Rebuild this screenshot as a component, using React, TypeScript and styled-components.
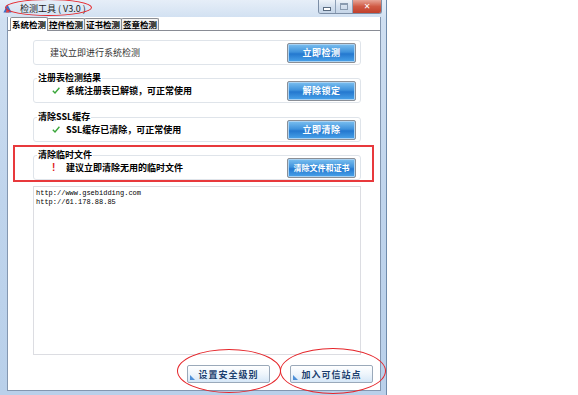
import React from "react";
import styled, { createGlobalStyle } from "styled-components";

const GlobalStyle = createGlobalStyle`
  html, body {
    margin: 0;
    padding: 0;
    background: #fff;
  }
  body {
    font-family: "Noto Sans CJK SC", "Noto Sans", sans-serif;
  }
`;

function CheckIcon() {
  return (
    <svg width="8" height="7" viewBox="0 0 8 7">
      <path d="M0.8 3.8 L3 6 L7.4 0.8" fill="none" stroke="#3aa63a" strokeWidth="1.4" />
    </svg>
  );
}

function AppIcon() {
  return (
    <svg width="9" height="9" viewBox="0 0 9 9">
      <path d="M4.5 0.5 L8.6 8.4 L0.4 8.4 Z" fill="#3c6fc6" />
      <path d="M4.5 4 L6.4 8.4 L2.6 8.4 Z" fill="#e04848" />
    </svg>
  );
}

const sections = [
  {
    label: "注册表检测结果",
    text: "系统注册表已解锁，可正常使用",
    button: "解除锁定",
    ok: true,
  },
  {
    label: "清除SSL缓存",
    text: "SSL缓存已清除，可正常使用",
    button: "立即清除",
    ok: true,
  },
  {
    label: "清除临时文件",
    text: "建议立即清除无用的临时文件",
    button: "清除文件和证书",
    ok: false,
  },
];

const tabs = ["系统检测", "控件检测", "证书检测", "签章检测"];

export default function App() {
  return (
    <Page>
      <GlobalStyle />
      <Window>
        <TitleBar>
          <AppIcon />
          <Title>检测工具 ( V3.0 )</Title>
          <Controls>
            <CtrlButton>
              <MinGlyph />
            </CtrlButton>
            <CtrlButton>
              <MaxGlyph />
            </CtrlButton>
            <CloseButton>✕</CloseButton>
          </Controls>
        </TitleBar>
        <Client>
          <TabStrip>
            {tabs.map((t, i) => (
              <Tab key={t} $active={i === 0}>
                {t}
              </Tab>
            ))}
          </TabStrip>
          <Panel>
            <Box>
              <Hint>建议立即进行系统检测</Hint>
              <ActionButton>立即检测</ActionButton>
            </Box>
            {sections.map((s, i) => (
              <Group key={s.label} $gap={i === 1 ? 9 : 8}>
                <Legend>{s.label}</Legend>
                <Box>
                  <Message>
                    <Mark>{s.ok ? <CheckIcon /> : <Bang>!</Bang>}</Mark>
                    {s.text}
                  </Message>
                  <ActionButton $small={s.button.length > 4}>{s.button}</ActionButton>
                </Box>
              </Group>
            ))}
            <Sites>
              {"http://www.gsebidding.com\nhttp://61.178.88.85"}
            </Sites>
            <BottomRow>
              <LightButton>设置安全级别</LightButton>
              <LightButton>加入可信站点</LightButton>
            </BottomRow>
          </Panel>
        </Client>
      </Window>

      <Ellipse $x={5} $y={-1} $w={87} $h={17} />
      <Frame />
      <Ellipse $x={177} $y={349} $w={104} $h={44} />
      <Ellipse $x={280} $y={348} $w={106} $h={46} />
    </Page>
  );
}

const Page = styled.div`
  position: relative;
  width: 578px;
  height: 395px;
  overflow: hidden;
  background: #fff;
  display: flex;
`;

const Window = styled.div`
  width: 387px;
  height: 395px;
  box-sizing: border-box;
  display: flex;
  flex-direction: column;
  padding: 0 5px 4px 7px;
  background: linear-gradient(180deg, #e6eef8 0px, #cfdff1 20px, #bfd4ec 200px, #b9d0ea 395px);
  border-right: 1px solid #6f8bab;
`;

const TitleBar = styled.div`
  height: 17px;
  display: flex;
  align-items: center;
  margin-left: -4px;
`;

const Title = styled.div`
  margin-left: 8px;
  font-size: 9px;
  line-height: 12px;
  color: #1a1a1a;
`;

const Controls = styled.div`
  margin-left: auto;
  margin-right: -1px;
  align-self: flex-start;
  display: flex;
  height: 13px;
  border: 1px solid #7c8ea6;
  border-top: none;
  border-radius: 0 0 3px 3px;
  overflow: hidden;
`;

const CtrlButton = styled.div`
  width: 16px;
  height: 13px;
  display: flex;
  align-items: center;
  justify-content: center;
  background: linear-gradient(#eef3f9, #d4e0ee 50%, #c5d5e8);
  border-right: 1px solid #8d9fb6;
`;

const MinGlyph = styled.div`
  width: 6px;
  height: 2px;
  margin-top: 5px;
  background: #fff;
  border: 1px solid #5a6b80;
`;

const MaxGlyph = styled.div`
  width: 6px;
  height: 4px;
  border: 1px solid #8a9bb0;
  border-top-width: 2px;
`;

const CloseButton = styled.div`
  width: 28px;
  height: 13px;
  display: flex;
  align-items: center;
  justify-content: center;
  font-family: "DejaVu Sans", sans-serif;
  font-size: 8px;
  font-weight: bold;
  color: #fff;
  background: linear-gradient(#e8a597, #d05a44 50%, #c0402c);
`;

const Client = styled.div`
  flex: 1;
  display: flex;
  flex-direction: column;
  background: #fff;
  border: 1px solid #8497b0;
  border-top: none;
`;

const TabStrip = styled.div`
  height: 13px;
  display: flex;
  align-items: flex-end;
  padding-left: 2px;
  background: #fff;
`;

const Tab = styled.div<{ $active?: boolean }>`
  position: relative;
  z-index: ${(p) => (p.$active ? 2 : 1)};
  height: ${(p) => (p.$active ? 14 : 12)}px;
  margin-bottom: ${(p) => (p.$active ? -1 : 0)}px;
  margin-right: -1px;
  box-sizing: border-box;
  padding: ${(p) => (p.$active ? "1px 1px 0" : "0 1px")};
  border: 1px solid #8c8e94;
  border-bottom: none;
  border-radius: 2px 2px 0 0;
  background: ${(p) => (p.$active ? "#fff" : "linear-gradient(#f6f6f6, #e4e4e4)")};
  font-size: 8.5px;
  line-height: 11px;
  font-weight: bold;
  color: #000;
  white-space: nowrap;
`;

const Panel = styled.div`
  flex: 1;
  display: flex;
  flex-direction: column;
  border-top: 1px solid #898c95;
  padding: 9px 19px 7px 25px;
`;

const Group = styled.div<{ $gap: number }>`
  display: flex;
  flex-direction: column;
  margin-top: ${(p) => p.$gap}px;
`;

const Legend = styled.div`
  position: relative;
  z-index: 1;
  align-self: flex-start;
  height: 10px;
  margin: 0 0 -5px 4px;
  padding: 0 1px;
  background: #fff;
  font-size: 9px;
  line-height: 10px;
  font-weight: bold;
  color: #000;
`;

const Box = styled.div`
  height: 25px;
  box-sizing: border-box;
  display: flex;
  align-items: center;
  justify-content: space-between;
  padding: 0 4px 0 16px;
  border: 1px solid #dfe4ea;
  border-radius: 3px;
`;

const Hint = styled.div`
  font-size: 9px;
  color: #333;
`;

const Message = styled.div`
  display: flex;
  align-items: center;
  font-size: 9px;
  font-weight: bold;
  color: #000;
`;

const Mark = styled.span`
  width: 14px;
  padding-left: 2px;
  display: inline-flex;
  align-items: center;
`;

const Bang = styled.span`
  font-family: "Liberation Sans", sans-serif;
  font-size: 10px;
  font-weight: bold;
  color: #e02020;
`;

const ActionButton = styled.div<{ $small?: boolean }>`
  width: 69px;
  height: 20px;
  box-sizing: border-box;
  display: flex;
  align-items: center;
  justify-content: center;
  border: 1px solid #8b8f96;
  border-radius: 2px;
  box-shadow: inset 0 0 0 1px #a9d2f3;
  background: linear-gradient(#7cc0f0, #3f92dc 45%, #2478cf 55%, #4aa3ea);
  color: #fff;
  font-size: ${(p) => (p.$small ? 8 : 9)}px;
  font-weight: bold;
  letter-spacing: ${(p) => (p.$small ? 0 : 0.5)}px;
  white-space: nowrap;
`;

const Sites = styled.div`
  margin-top: 6px;
  flex: 1;
  border: 1px solid #dcdde2;
  padding: 2px 2px;
  font-family: "Liberation Mono", monospace;
  font-size: 7px;
  line-height: 9px;
  color: #000;
  white-space: pre;
`;

const BottomRow = styled.div`
  display: flex;
  justify-content: flex-end;
  gap: 20px;
  margin-top: 10px;
  margin-right: -12px;
`;

const LightButton = styled.div`
  position: relative;
  width: 83px;
  height: 18px;
  box-sizing: border-box;
  display: flex;
  align-items: center;
  justify-content: center;
  border: 1px solid #9aa9ba;
  border-radius: 2px;
  background: linear-gradient(#ffffff, #eef5fc 50%, #d6e7f7);
  color: #1c3f6e;
  font-size: 9px;
  font-weight: bold;
  letter-spacing: 1px;

  &::before {
    content: "";
    position: absolute;
    left: 2px;
    bottom: 2px;
    border-left: 5px solid #4d8fd8;
    border-top: 5px solid transparent;
  }
`;

const Ellipse = styled.div<{ $x: number; $y: number; $w: number; $h: number }>`
  position: absolute;
  left: ${(p) => p.$x}px;
  top: ${(p) => p.$y}px;
  width: ${(p) => p.$w}px;
  height: ${(p) => p.$h}px;
  box-sizing: border-box;
  border: 1.5px solid #e5252a;
  border-radius: 50%;
  pointer-events: none;
`;

const Frame = styled.div`
  position: absolute;
  left: 13px;
  top: 145px;
  width: 361px;
  height: 37px;
  box-sizing: border-box;
  border: 2px solid #e8393c;
  pointer-events: none;
`;
